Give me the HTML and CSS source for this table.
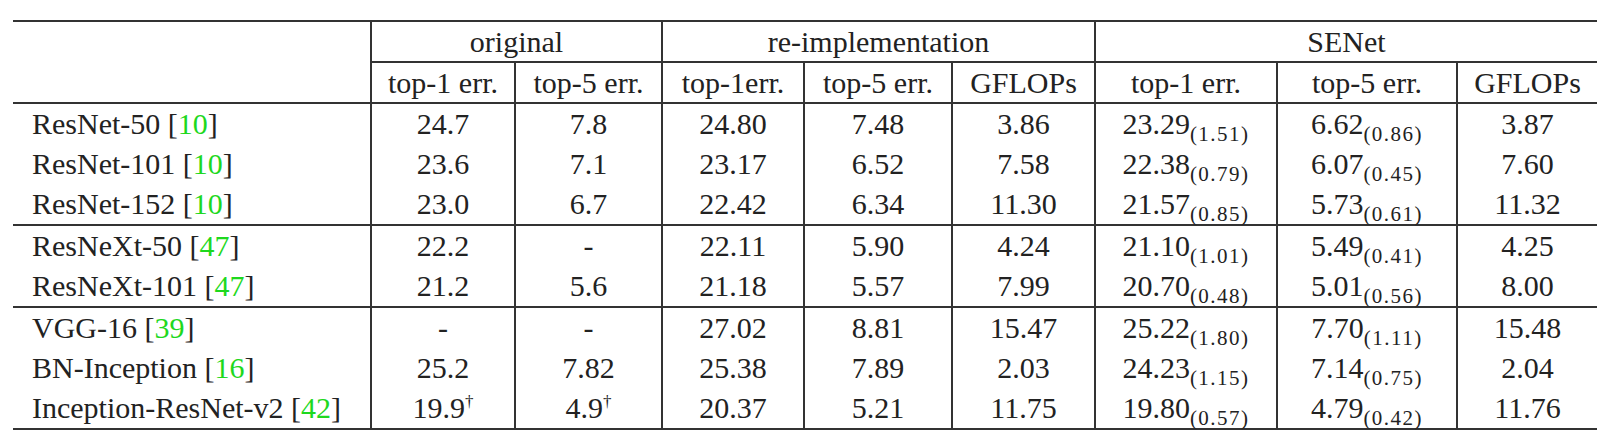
FILE: index.html
```html
<!DOCTYPE html>
<html lang="en">
<head>
    <meta charset="UTF-8">
    <title>SENet ImageNet results</title>
    <link rel="stylesheet" href="styles.css">
</head>
<body>

<div class="page">
    <table class="results">
        <colgroup>
            <col class="c-label">
            <col class="c-144">
            <col class="c-147">
            <col class="c-142">
            <col class="c-148">
            <col class="c-143">
            <col class="c-182">
            <col class="c-180">
            <col class="c-140">
        </colgroup>
        <thead>
            <tr class="group-row">
                <th class="label" rowspan="2"></th>
                <th colspan="2">original</th>
                <th colspan="3">re-implementation</th>
                <th colspan="3">SENet</th>
            </tr>
            <tr>
                <th>top-1 err.</th>
                <th>top-5 err.</th>
                <th>top-1err.</th>
                <th>top-5 err.</th>
                <th>GFLOPs</th>
                <th>top-1 err.</th>
                <th>top-5 err.</th>
                <th>GFLOPs</th>
            </tr>
        </thead>
        <tbody>
            <tr>
                <td class="label">ResNet-50 [<span class="cite">10</span>]</td>
                <td>24.7</td><td>7.8</td>
                <td>24.80</td><td>7.48</td><td>3.86</td>
                <td>23.29<sub>(1.51)</sub></td><td>6.62<sub>(0.86)</sub></td><td>3.87</td>
            </tr>
            <tr>
                <td class="label">ResNet-101 [<span class="cite">10</span>]</td>
                <td>23.6</td><td>7.1</td>
                <td>23.17</td><td>6.52</td><td>7.58</td>
                <td>22.38<sub>(0.79)</sub></td><td>6.07<sub>(0.45)</sub></td><td>7.60</td>
            </tr>
            <tr>
                <td class="label">ResNet-152 [<span class="cite">10</span>]</td>
                <td>23.0</td><td>6.7</td>
                <td>22.42</td><td>6.34</td><td>11.30</td>
                <td>21.57<sub>(0.85)</sub></td><td>5.73<sub>(0.61)</sub></td><td>11.32</td>
            </tr>
        </tbody>
        <tbody>
            <tr>
                <td class="label">ResNeXt-50 [<span class="cite">47</span>]</td>
                <td>22.2</td><td>-</td>
                <td>22.11</td><td>5.90</td><td>4.24</td>
                <td>21.10<sub>(1.01)</sub></td><td>5.49<sub>(0.41)</sub></td><td>4.25</td>
            </tr>
            <tr>
                <td class="label">ResNeXt-101 [<span class="cite">47</span>]</td>
                <td>21.2</td><td>5.6</td>
                <td>21.18</td><td>5.57</td><td>7.99</td>
                <td>20.70<sub>(0.48)</sub></td><td>5.01<sub>(0.56)</sub></td><td>8.00</td>
            </tr>
        </tbody>
        <tbody>
            <tr>
                <td class="label">VGG-16 [<span class="cite">39</span>]</td>
                <td>-</td><td>-</td>
                <td>27.02</td><td>8.81</td><td>15.47</td>
                <td>25.22<sub>(1.80)</sub></td><td>7.70<sub>(1.11)</sub></td><td>15.48</td>
            </tr>
            <tr>
                <td class="label">BN-Inception [<span class="cite">16</span>]</td>
                <td>25.2</td><td>7.82</td>
                <td>25.38</td><td>7.89</td><td>2.03</td>
                <td>24.23<sub>(1.15)</sub></td><td>7.14<sub>(0.75)</sub></td><td>2.04</td>
            </tr>
            <tr>
                <td class="label">Inception-ResNet-v2 [<span class="cite">42</span>]</td>
                <td>19.9<sup>&dagger;</sup></td><td>4.9<sup>&dagger;</sup></td>
                <td>20.37</td><td>5.21</td><td>11.75</td>
                <td>19.80<sub>(0.57)</sub></td><td>4.79<sub>(0.42)</sub></td><td>11.76</td>
            </tr>
        </tbody>
    </table>
</div>

</body>
</html>
```

FILE: styles.css
```css
body {
    margin: 0;
    background-color: #ffffff;
    font-family: "Liberation Serif", Tinos, "Times New Roman", "DejaVu Serif", serif;
    color: #222222;
}
.page {
    padding: 20px 13px 0 13px;
}
.results {
    width: 1584px;
    table-layout: fixed;
    border-collapse: collapse;
    font-family: "Liberation Serif", Tinos, "Times New Roman", "DejaVu Serif", serif;
    font-size: 30px;
    border-top: 2px solid #333333;
    border-bottom: 2px solid #333333;
}
.c-label { width: 358px; }
.c-144 { width: 144px; }
.c-147 { width: 147px; }
.c-142 { width: 142px; }
.c-148 { width: 148px; }
.c-143 { width: 143px; }
.c-182 { width: 182px; }
.c-180 { width: 180px; }
.c-140 { width: 140px; }

.results th,
.results td {
    height: 40px;
    padding: 0;
    line-height: 40px;
    text-align: center;
    vertical-align: baseline;
    font-weight: normal;
    white-space: nowrap;
    border-left: 2px solid #333333;
}
.results th {
    height: 39px;
    line-height: 39px;
}
.results .label {
    text-align: left;
    padding-left: 19px;
    border-left: none;
}
.results .group-row th {
    border-bottom: 2px solid #333333;
}
.results thead {
    border-bottom: 2px solid #333333;
}
.results tbody + tbody {
    border-top: 2px solid #333333;
}
.cite {
    color: #1ed81e;
}
sub {
    font-size: 21px;
    letter-spacing: 1.5px;
    line-height: 0;
    vertical-align: -7px;
}
sup {
    font-size: 17px;
    line-height: 0;
    vertical-align: 11px;
}
```
